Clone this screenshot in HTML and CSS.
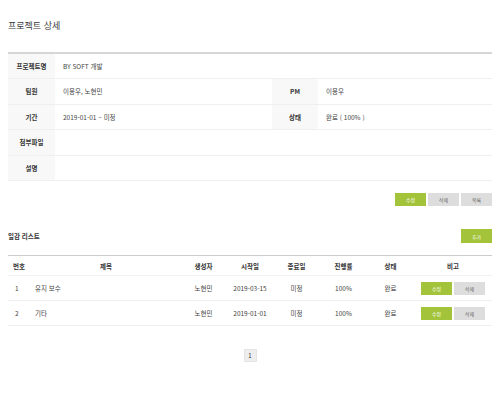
FILE: index.html
```html
<!DOCTYPE html>
<html lang="ko">
<head>
<meta charset="utf-8">
<title>프로젝트 상세</title>
<link rel="stylesheet" href="styles.css">
</head>
<body>
<div class="page">
  <h1 class="title">프로젝트 상세</h1>

  <table class="detail">
    <colgroup>
      <col class="col-label">
      <col class="col-value1">
      <col class="col-label2">
      <col class="col-value2">
    </colgroup>
    <tr>
      <th>프로젝트명</th>
      <td colspan="3">BY SOFT 개발</td>
    </tr>
    <tr>
      <th>팀원</th>
      <td>이용우, 노현민</td>
      <th>PM</th>
      <td>이용우</td>
    </tr>
    <tr>
      <th>기간</th>
      <td>2019-01-01 ~ 미정</td>
      <th>상태</th>
      <td>완료 ( 100% )</td>
    </tr>
    <tr>
      <th>첨부파일</th>
      <td colspan="3"></td>
    </tr>
    <tr>
      <th>설명</th>
      <td colspan="3"></td>
    </tr>
  </table>

  <div class="actions">
    <button class="btn green">수정</button>
    <button class="btn gray">삭제</button>
    <button class="btn gray">목록</button>
  </div>

  <div class="list-head">
    <h2 class="subtitle">일감 리스트</h2>
    <button class="btn green add">추가</button>
  </div>

  <table class="list">
    <colgroup>
      <col class="c-no">
      <col class="c-title">
      <col class="c-w47">
      <col class="c-w46">
      <col class="c-w47">
      <col class="c-w47">
      <col class="c-w47">
      <col class="c-etc">
    </colgroup>
    <thead>
      <tr>
        <th class="h-no">번호</th>
        <th>제목</th>
        <th>생성자</th>
        <th>시작일</th>
        <th>종료일</th>
        <th>진행률</th>
        <th>상태</th>
        <th>비고</th>
      </tr>
    </thead>
    <tbody>
      <tr>
        <td class="num">1</td>
        <td class="left">유지 보수</td>
        <td>노현민</td>
        <td>2019-03-15</td>
        <td>미정</td>
        <td>100%</td>
        <td>완료</td>
        <td><div class="row-btns"><button class="btn green">수정</button><button class="btn gray">삭제</button></div></td>
      </tr>
      <tr>
        <td class="num">2</td>
        <td class="left">기타</td>
        <td>노현민</td>
        <td>2019-01-01</td>
        <td>미정</td>
        <td>100%</td>
        <td>완료</td>
        <td><div class="row-btns"><button class="btn green">수정</button><button class="btn gray">삭제</button></div></td>
      </tr>
    </tbody>
  </table>

  <div class="pager">
    <span class="page-num">1</span>
  </div>
</div>
</body>
</html>
```

FILE: styles.css
```css
* { box-sizing: border-box; }

html, body {
  margin: 0;
  padding: 0;
  background: #ffffff;
}

body {
  font-family: "Noto Sans CJK KR", "Noto Sans", sans-serif;
  color: #333333;
  font-size: 6.5px;
}

.page {
  width: 484px;
  margin: 0 8px;
  padding-top: 19px;
}

.title {
  margin: 0;
  font-size: 9px;
  line-height: 13px;
  font-weight: 400;
  color: #3a3a3a;
  height: 33px;
}

.detail {
  width: 484px;
  border-collapse: collapse;
  border-top: 2px solid #d6d6d6;
  table-layout: fixed;
}

.col-label { width: 47px; }
.col-value1 { width: 217px; }
.col-label2 { width: 46px; }
.col-value2 { width: 174px; }

.detail th,
.detail td {
  height: 25.5px;
  border-bottom: 1px solid #efefef;
  padding: 0;
  font-size: 6.5px;
  vertical-align: middle;
}

.detail th {
  background: #f8f8f8;
  font-weight: 700;
  color: #333333;
  text-align: center;
}

.detail td {
  padding-left: 8px;
  color: #444444;
}

.actions {
  display: flex;
  justify-content: flex-end;
  gap: 2px;
  margin-top: 12px;
}

.btn {
  width: 31px;
  height: 13px;
  border: none;
  padding: 0;
  margin: 0;
  font-family: inherit;
  font-size: 5px;
  line-height: 13px;
  cursor: pointer;
}

.btn.green {
  background: #a2c33a;
  color: #ffffff;
}

.btn.gray {
  background: #dddddd;
  color: #666666;
}

.list-head {
  display: flex;
  justify-content: space-between;
  align-items: center;
  margin-top: 23px;
  height: 14px;
}

.subtitle {
  margin: 0;
  font-size: 6.5px;
  font-weight: 700;
  color: #333333;
}

.btn.add {
  height: 14px;
  width: 31px;
}

.list {
  width: 484px;
  margin-top: 12px;
  border-collapse: collapse;
  table-layout: fixed;
  border-top: 1px solid #cccccc;
}

.c-no { width: 24px; }
.c-title { width: 148px; }
.c-w47 { width: 47px; }
.c-w46 { width: 46px; }
.c-etc { width: 78px; }

.list th {
  height: 20px;
  font-weight: 700;
  font-size: 6.5px;
  color: #333333;
  text-align: center;
  padding: 0;
  border-bottom: 1px solid #f2f2f2;
}

.list th.h-no {
  text-align: left;
  padding-left: 5px;
}

.list td {
  height: 25px;
  font-size: 6.5px;
  color: #444444;
  text-align: center;
  padding: 0;
  border-bottom: 1px solid #eeeeee;
}

.list td.num {
  text-align: left;
  padding-left: 7px;
}

.list td.left {
  text-align: left;
  padding-left: 3px;
}

.row-btns {
  display: flex;
  justify-content: center;
  gap: 2px;
}

.pager {
  display: flex;
  justify-content: center;
  margin-top: 23px;
}

.page-num {
  display: inline-flex;
  align-items: center;
  justify-content: center;
  width: 13px;
  height: 13px;
  background: #eeeeee;
  border: 1px solid #e4e4e4;
  font-size: 6px;
  color: #333333;
}
```
